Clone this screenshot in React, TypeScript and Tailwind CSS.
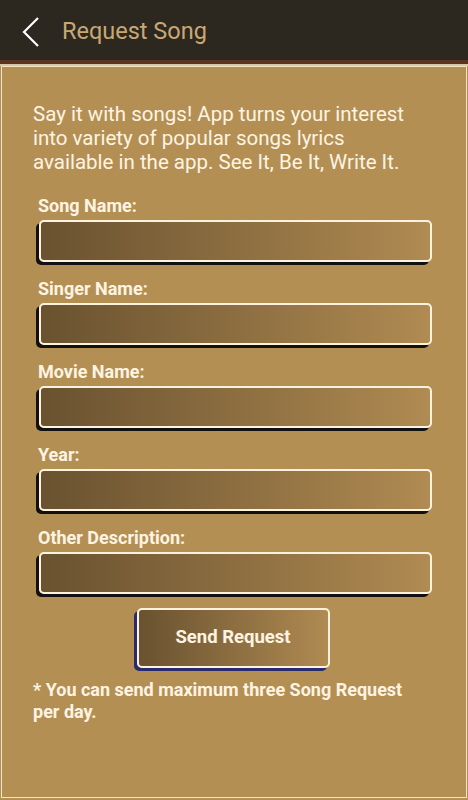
import React from 'react';

const FIELDS = ['Song Name:', 'Singer Name:', 'Movie Name:', 'Year:', 'Other Description:'];

export default function App() {
  return (
    <div className="w-[468px] h-[800px] bg-[#b48f54] flex flex-col overflow-hidden" style={{ fontFamily: 'Roboto, "Noto Sans", sans-serif' }}>
      {/* Header */}
      <div className="h-[60px] bg-[#2c2820] flex items-center shrink-0 pt-[3px]">
        <svg width="20" height="32" viewBox="0 0 20 32" className="ml-[21px]">
          <path d="M17 2 L3 16 L17 30" fill="none" stroke="#ffffff" strokeWidth="2.2" />
        </svg>
        <span className="ml-[21px] text-[23.5px] text-[#c9a874] leading-none">Request Song</span>
      </div>
      <div className="h-[4px] bg-[#5b3421] shrink-0" />
      <div className="h-[2px] bg-[#d8c7a4] shrink-0" />

      {/* Panel */}
      <div className="flex-1 mx-px mb-[2px] border border-[#efe3c8] bg-[#b48f54] pt-[35px] pl-[31px] pr-[30px]">
        <p className="w-[392px] text-[20.5px] leading-[24px] text-[#fff4e2]">
          Say it with songs! App turns your interest into variety of popular songs lyrics available in the app. See It, Be It, Write It.
        </p>

        <div className="mt-[22px] flex flex-col">
          {FIELDS.map((f) => (
            <div key={f} className="flex flex-col mb-[17px]">
              <label className="pl-[5px] text-[18px] leading-[20px] font-bold text-[#fff4e2]">{f}</label>
              <div className="mt-[4px] ml-[6px] w-[393px] h-[42px] rounded-[5px] border-2 border-[#fff3df] bg-gradient-to-r from-[#6a5230] to-[#b08b52] shadow-[-3px_3px_0_#111]" />
            </div>
          ))}
        </div>

        <div className="-mt-[3px] flex justify-center pr-[3px]">
          <button className="w-[193px] h-[60px] rounded-[5px] border-2 border-[#fff3df] bg-gradient-to-r from-[#6a5230] to-[#b08b52] shadow-[-3px_3px_0_#2a2a6e] text-[18.5px] font-bold text-[#fff4e2]">
            Send Request
          </button>
        </div>

        <p className="mt-[11px] w-[385px] text-[18px] leading-[22px] font-bold text-[#fff4e2]">
          * You can send maximum three Song Request per day.
        </p>
      </div>
    </div>
  );
}
